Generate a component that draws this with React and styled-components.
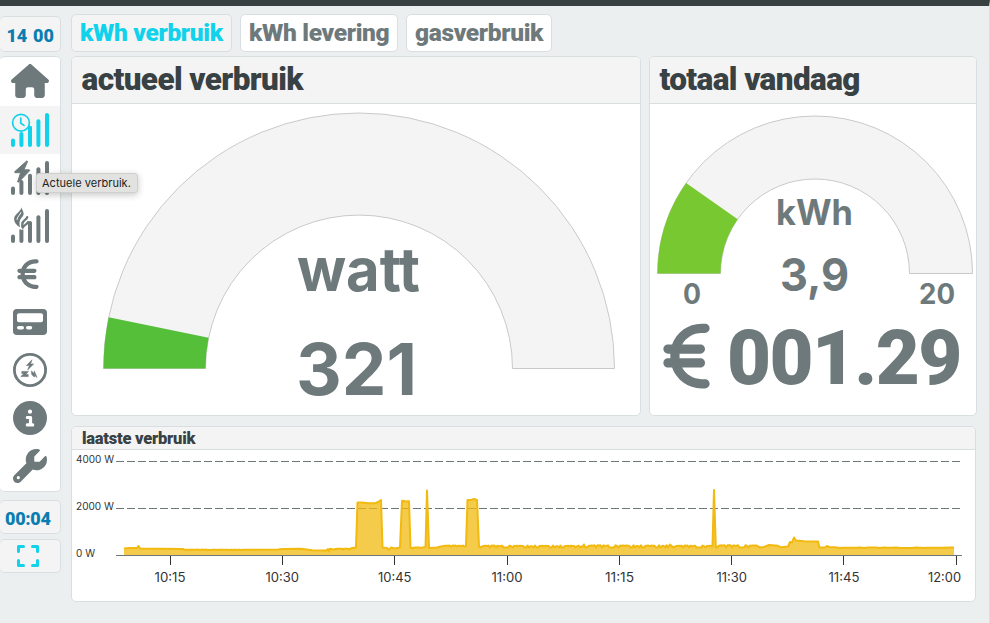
import React from 'react';
import styled, { createGlobalStyle } from 'styled-components';
import { FaHouse, FaEuroSign, FaCircleInfo, FaWrench } from 'react-icons/fa6';

const GlobalStyle = createGlobalStyle`
  * { box-sizing: border-box; }
  body { margin: 0; background: #ebeff0; font-family: Roboto, sans-serif; overflow: hidden; }
  svg { display: block; flex: none; }
`;

const C = {
  grey: '#6e797b',
  dark: '#384143',
  cyan: '#10d2ea',
  blue: '#0b7db0',
  line: '#d9dfe1',
  soft: '#f4f4f4',
};

const Page = styled.div`
  width: 990px;
  height: 623px;
  border-top: 6px solid #384042;
  display: flex;
  gap: 10px;
  position: relative;
  border-right: 1px solid #dcdedf;
`;
const Sidebar = styled.aside`
  width: 61px;
  padding-top: 10px;
  display: flex;
  flex-direction: column;
`;
const SideBox = styled.div`
  height: ${(p) => p.$h}px;
  margin-bottom: ${(p) => p.$gap}px;
  background: ${C.soft};
  border: 1px solid ${C.line};
  border-left: 0;
  border-radius: 5px;
  display: flex;
  align-items: center;
  padding-left: ${(p) => p.$pad || 0}px;
  padding-top: ${(p) => p.$top || 0}px;
`;
const SideTime = styled.span`
  color: ${C.blue};
  font-weight: 900;
  font-size: 18px;
  line-height: 20px;
  letter-spacing: ${(p) => p.$ls}px;
  word-spacing: ${(p) => p.$ws || 0}px;
  white-space: nowrap;
`;
const Menu = styled.nav`
  height: 436px;
  margin-bottom: 8px;
  padding-top: 1px;
  background: #fff;
  border: 1px solid ${C.line};
  border-left: 0;
  border-radius: 5px;
  display: flex;
  flex-direction: column;
  overflow: hidden;
`;
const MenuItem = styled.div`
  height: 48px;
  flex: none;
  display: flex;
  align-items: center;
  justify-content: center;
  padding-right: ${(p) => p.$shift || 0}px;
  color: ${(p) => (p.$active ? C.cyan : C.grey)};
  background: ${(p) => (p.$active ? C.soft : '#fff')};
`;
const HomeIcon = styled(FaHouse)`
  width: 38px;
  height: 34px;
  margin-bottom: 2px;
`;
const Main = styled.main`
  width: 906px;
  padding-top: 8px;
`;
const Tabs = styled.div`
  display: flex;
  gap: 8px;
  height: 38px;
  margin-bottom: 4px;
`;
const Tab = styled.div`
  width: ${(p) => p.$w}px;
  padding-left: 8px;
  border: 1px solid ${C.line};
  border-radius: 5px;
  background: ${(p) => (p.$active ? C.soft : '#fff')};
  color: ${(p) => (p.$active ? C.cyan : C.grey)};
  font-weight: 900;
  font-size: 24.5px;
  line-height: 36px;
  letter-spacing: -0.34px;
  white-space: nowrap;
`;
const Row = styled.div`
  display: flex;
  gap: 8px;
  margin-bottom: 10px;
`;
const Panel = styled.section`
  width: ${(p) => p.$w}px;
  height: ${(p) => p.$h}px;
  background: #fff;
  border: 1px solid ${C.line};
  border-radius: 5px;
  overflow: hidden;
`;
const PanelHead = styled.h2`
  margin: 0;
  height: ${(p) => (p.$small ? 23 : 47)}px;
  padding-left: ${(p) => (p.$small ? 10 : 9.5)}px;
  background: ${C.soft};
  border-bottom: 1px solid ${C.line};
  color: ${C.dark};
  font-weight: 900;
  font-size: ${(p) => (p.$small ? 16.5 : 31.5)}px;
  line-height: ${(p) => (p.$small ? 23 : 46)}px;
  letter-spacing: ${(p) => (p.$small ? -0.24 : -0.6)}px;
  white-space: nowrap;
`;
const CostRow = styled.div`
  display: flex;
  align-items: center;
  gap: 18px;
  height: 76px;
  padding-left: 13px;
  color: ${C.grey};
`;
const CostEuro = styled(FaEuroSign)`
  width: 47px;
  height: 74px;
`;
const CostValue = styled.span`
  padding-top: 4px;
  font-weight: 900;
  font-size: 76px;
  line-height: 76px;
  letter-spacing: -1.6px;
  margin-left: -1px;
  white-space: nowrap;
`;
const Tooltip = styled.div`
  position: absolute;
  left: 36px;
  top: 167px;
  width: 102px;
  height: 20px;
  padding-left: 5px;
  background: #e2e2e0;
  border: 1px solid #cfcfcd;
  border-radius: 3px;
  box-shadow: 0 2px 7px rgba(0, 0, 0, 0.22);
  color: #222;
  font: 400 11px/18px Inter, sans-serif;
  letter-spacing: 0.02px;
  white-space: nowrap;
`;

const BARS = [[2, 28.5], [10.4, 22], [19, 15.7], [27.4, 9.3], [36, 3]];

function BarsIcon({ kind }) {
  return (
    <svg width="38" height="36" viewBox="0 0 38 36" fill="none" stroke="currentColor" overflow="visible">
      {BARS.map(([x, y]) => (
        <path key={x} d={`M${x} ${y}V33`} strokeWidth="4" strokeLinecap="round" />
      ))}
      {kind === 'clock' && (
        <g strokeWidth="1.7" strokeLinecap="round" strokeLinejoin="round">
          <circle cx="10" cy="10.7" r="8.4" fill="#f4f4f4" />
          <path d="M9.8 6V11.2L13 13.4" />
          <path d="M19 16V30" strokeWidth="4" />
        </g>
      )}
      {kind === 'bolt' && (
        <path
          d="M15.7 1L3.6 11.8L4 12.7H9.6L6.6 21.8L7.6 22.2L18.7 10.6L18.3 9.8H12.9L16.6 1.4Z"
          fill="currentColor"
          strokeWidth="1"
          strokeLinejoin="round"
        />
      )}
      {kind === 'flame' && (
        <g>
          <path
            d="M2 9L9 4L17 8L17 16L11 22L6 20Z"
            fill="#fff"
            stroke="none"
          />
          <path
            d="M10.400 -0.800C10.900 1.800 13.600 4.300 12.300 7.200C11.200 9.700 7 11.600 9.100 19.300C5.600 17.600 2.600 14 3.200 9.800C3.900 5.800 9.900 3.700 10.400 -0.800Z"
            fill="currentColor"
            stroke="none"
          />
          <path d="M9.900 4.600C9.300 6.800 6.300 8.400 6 11.400" stroke="#fff" strokeWidth="1" strokeLinecap="round" />
          <path d="M16.200 9.200C15.500 12 11.300 12.300 11.300 16.200V19M17 14.200C16.300 16.300 13 17 11.800 19.600" strokeWidth="2.300" strokeLinecap="round" />
          <path d="M19 15V30" strokeWidth="4" strokeLinecap="round" />
        </g>
      )}
    </svg>
  );
}

function MeterIcon() {
  return (
    <svg width="34" height="26" viewBox="0 0 34 26">
      <rect width="34" height="26" rx="4" fill="currentColor" />
      <rect x="4" y="4.3" width="26" height="9" rx="2" fill="#fff" />
      <rect x="4" y="17" width="7" height="3.6" rx="1.8" fill="#fff" />
      <rect x="13" y="17" width="6.2" height="3.6" rx="1.8" fill="#fff" />
    </svg>
  );
}

const BOLT = 'M2 -5.2L-3.6 0.5H-0.6L-2.3 4.9L3.6 -1.1H0.5Z';

function PhasesIcon() {
  return (
    <svg width="34" height="34" viewBox="0 0 34 34">
      <circle cx="17" cy="17" r="15.6" fill="none" stroke="currentColor" strokeWidth="2.8" />
      <g fill="currentColor" stroke="currentColor" strokeWidth=".6" strokeLinejoin="round">
        <path transform="translate(17 12)" d={BOLT} />
        <path d="M8.8 18.4H15.4L12.6 21.4H15.2V23.6H7.8L11 20.6H8.8Z" />
        <path d="M18.400 17.900L21.300 20.600V17.900L24 24.400L21.400 22.200V24.200L18.800 21.600Z" />
      </g>
    </svg>
  );
}

function ExpandIcon() {
  return (
    <svg width="22" height="22" viewBox="0 0 22 22" fill="none" stroke={C.cyan} strokeWidth="3" strokeLinecap="round" strokeLinejoin="round">
      <path d="M6.5 1.5H1.5V6.5M15.5 1.5H20.5V6.5M1.5 15.5V20.5H6.5M20.5 15.5V20.5H15.5" />
    </svg>
  );
}

const sector = (cx, cy, R, r, a0, a1) => {
  const p = (rad, a) => {
    const t = (a * Math.PI) / 180;
    return `${cx - rad * Math.cos(t)} ${cy - rad * Math.sin(t)}`;
  };
  return `M${p(R, a0)}A${R} ${R} 0 0 1 ${p(R, a1)}L${p(r, a1)}A${r} ${r} 0 0 0 ${p(r, a0)}Z`;
};

function Gauge({ width, height, cx, cy, R, r, value, max, color, labels }) {
  const a = (value / max) * 180;
  return (
    <svg width={width} height={height}>
      <path d={sector(cx, cy, R, r, 0, 180)} fill={C.soft} stroke="#c9c9c9" />
      <path d={sector(cx, cy, R, r, 0, a)} fill={color} />
      {labels.map(([text, x, y, size, w]) => (
        <text
          key={text}
          x={x}
          y={y}
          textLength={w}
          lengthAdjust="spacingAndGlyphs"
          fill={C.grey}
          fontFamily="Inter, sans-serif"
          fontWeight="700"
          fontSize={size}
        >
          {text}
        </text>
      ))}
    </svg>
  );
}

// Steady consumption with small ripples between two x positions.
const ripple = (from, to, base, amp, step = 1.5) => {
  const pts = [];
  for (let x = from, i = 0; x < to; x += step, i += 1) {
    const n = Math.abs(Math.sin(i * 12.9 + i * i * 0.37));
    pts.push([x, base - (n > 0.55 ? amp * n : 0)]);
  }
  return pts;
};

const USAGE = [
  [124, 548.4], [130, 548], [137, 548], [138.5, 546], [140, 548.5], [160, 548.8], [183, 549],
  ...ripple(185, 250, 550, 0.4),
  [255, 549.8], [278, 549.5], [283, 548.9], [300, 548.7], [303, 549], [312, 550.3],
  [326, 550.6], [328, 549], [329, 551.5], [330, 548.7], [333, 549.5],
  ...ripple(334, 350, 549.5, 0.8),
  [352, 548], [356, 547.5], [357.5, 502.5], [362, 502.5], [368, 503.2], [375, 503.3], [379, 501.5],
  [381, 500], [382.5, 547.5], [387, 548], [389, 550], [391, 547.5], [395, 548.5],
  [400, 547.5], [402, 501], [403, 500.7], [405, 501.5], [409, 501.2], [410.5, 547.5],
  ...ripple(412, 424, 548.2, 0.8),
  [425.5, 547], [427, 490.5], [429, 548], [437, 547.5], [440, 546.6],
  ...ripple(442, 465, 546.6, 1),
  [466, 546], [467.5, 500], [471, 500], [474, 499], [477, 500], [479, 546.5],
  ...ripple(481, 582, 547.5, 1.9),
  [583, 546.5], [584, 544.5], [585, 547],
  ...ripple(587, 669, 547.5, 2.2),
  [670, 544.5], [672, 546.5],
  ...ripple(674, 711, 547.5, 1.9),
  [712.5, 546.5], [714, 490], [715.8, 547.5],
  ...ripple(717, 757, 547.5, 2.3),
  [760, 547.5], [764, 547], [769, 545], [778, 545.8], [781, 547.3], [788, 546.5],
  [790, 542], [792, 542.5], [794, 537.5], [796, 540.5], [804, 541.2], [818, 541.6],
  [819.5, 547.5], [825, 547.5], [827, 546], [829, 547], [835, 547.2],
  ...ripple(840, 948, 548, 0.4, 4),
  [950, 547.5], [954, 547.5],
];

const TICKS = [
  ['10:15', 170.5, 154.5, 31], ['10:30', 282.5, 265.5, 33.5], ['10:45', 394.5, 378, 33.5],
  ['11:00', 507.5, 491.5, 31], ['11:15', 619.5, 605, 29], ['11:30', 731.5, 716.5, 30.5],
  ['11:45', 843.5, 828.5, 31], ['12:00', 956.5, 928, 33],
];

function UsageChart() {
  const line = USAGE.map((p) => p.join(' ')).join('L');
  return (
    <svg width="903" height="151" viewBox="72 450 903 151" fontFamily="Inter, sans-serif" fill="#333">
      {[461.5, 508.5].map((y) => (
        <path key={y} d={`M116 ${y}H961`} stroke="#6e7779" strokeDasharray="8 3" />
      ))}
      <path d={`M124 555L${line}V555Z`} fill="#f2b90f" fillOpacity=".75" />
      <path d={`M${line}`} fill="none" stroke="#f2b90f" strokeWidth="2" strokeLinejoin="round" />
      <path d="M116 555.5H962" stroke="#6e7779" />
      {[['4000 W', 463, 38], ['2000 W', 510, 38], ['0 W', 557, 19]].map(([t, y, w]) => (
        <text key={t} x="76" y={y} fontSize="10" textLength={w} lengthAdjust="spacingAndGlyphs">{t}</text>
      ))}
      {TICKS.map(([t, x, tx, w]) => (
        <g key={t}>
          <path d={`M${x} 556V565`} stroke="#333" />
          <text x={tx} y="582" fontSize="12.5" textLength={w} lengthAdjust="spacingAndGlyphs">{t}</text>
        </g>
      ))}
    </svg>
  );
}

export default function App() {
  return (
    <Page>
      <GlobalStyle />
      <Sidebar>
        <SideBox $h={36} $gap={4} $pad={6.5} $top={3}><SideTime $ls={-0.1} $ws={1.5}>14 00</SideTime></SideBox>
        <Menu>
          <MenuItem><HomeIcon /></MenuItem>
          <MenuItem $active><BarsIcon kind="clock" /></MenuItem>
          <MenuItem><BarsIcon kind="bolt" /></MenuItem>
          <MenuItem><BarsIcon kind="flame" /></MenuItem>
          <MenuItem $shift={4}><FaEuroSign size={34} /></MenuItem>
          <MenuItem><MeterIcon /></MenuItem>
          <MenuItem><PhasesIcon /></MenuItem>
          <MenuItem><FaCircleInfo size={34} /></MenuItem>
          <MenuItem><FaWrench size={34} /></MenuItem>
        </Menu>
        <SideBox $h={34} $gap={5} $pad={5} $top={3}><SideTime $ls={-0.3}>00:04</SideTime></SideBox>
        <SideBox $h={34} $gap={0} $pad={17}><ExpandIcon /></SideBox>
      </Sidebar>
      <Main>
        <Tabs>
          <Tab $w={161} $active>kWh verbruik</Tab>
          <Tab $w={158}>kWh levering</Tab>
          <Tab $w={146}>gasverbruik</Tab>
        </Tabs>
        <Row>
          <Panel $w={570} $h={360}>
            <PanelHead>actueel verbruik</PanelHead>
            <Gauge
              width={568} height={311} cx={287} cy={264.5} R={255.5} r={153.5}
              value={321} max={5000} color="#56bf3a"
              labels={[['watt', 225, 187, 60, 123], ['321', 224, 291, 71, 121]]}
            />
          </Panel>
          <Panel $w={328} $h={360}>
            <PanelHead>totaal vandaag</PanelHead>
            <Gauge
              width={326} height={214} cx={165} cy={169.5} R={157.5} r={94.5}
              value={3.9} max={20} color="#78c832"
              labels={[['kWh', 126, 121, 35, 77], ['3,9', 130, 187, 45, 69], ['0', 33, 200, 28, 18], ['20', 269, 200, 28, 36]]}
            />
            <CostRow>
              <CostEuro />
              <CostValue>001.29</CostValue>
            </CostRow>
          </Panel>
        </Row>
        <Panel $w={905} $h={176}>
          <PanelHead $small>laatste verbruik</PanelHead>
          <UsageChart />
        </Panel>
      </Main>
      <Tooltip>Actuele verbruik.</Tooltip>
    </Page>
  );
}
